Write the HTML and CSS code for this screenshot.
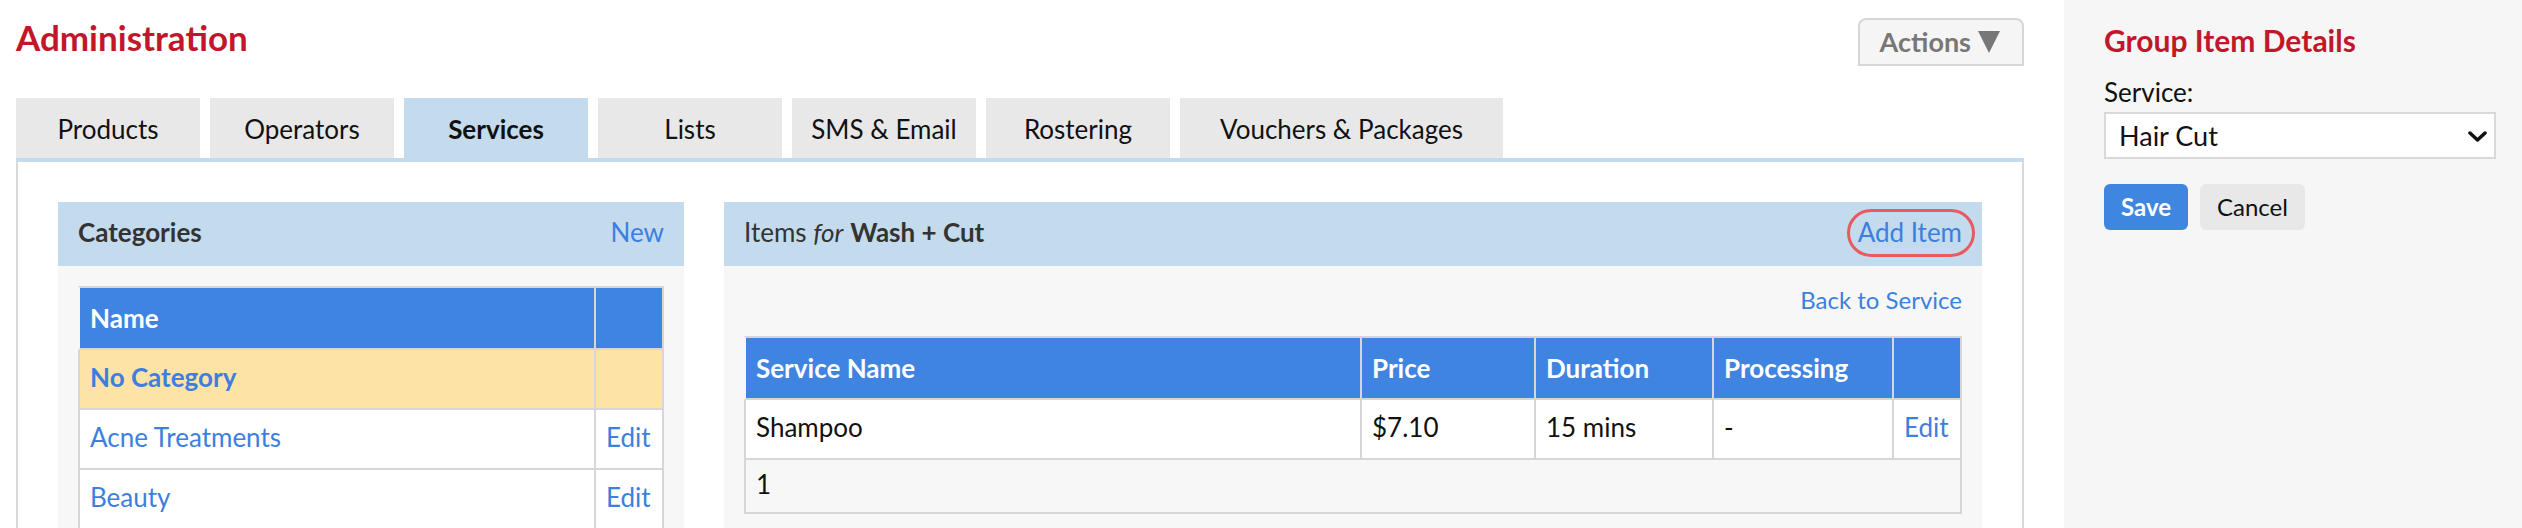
FILE: index.html
```html
<!DOCTYPE html>
<html lang="en">
<head>
<meta charset="utf-8">
<title>Administration</title>
<link rel="stylesheet" href="styles.css">
</head>
<body>
<div class="page">
  <main class="main">
    <div class="topbar">
      <h1 class="title">Administration</h1>
      <button class="actions" type="button"><span>Actions</span><svg class="tri" viewBox="0 0 22 22" width="22" height="22"><polygon points="0,0 22,0 11,22" fill="#777"/></svg></button>
    </div>
    <nav class="tabs">
      <div class="tab">Products</div>
      <div class="tab">Operators</div>
      <div class="tab active">Services</div>
      <div class="tab">Lists</div>
      <div class="tab">SMS &amp; Email</div>
      <div class="tab">Rostering</div>
      <div class="tab tab-wide">Vouchers &amp; Packages</div>
    </nav>
    <section class="content">
      <div class="panel categories">
        <div class="panel-head">
          <span class="strong">Categories</span>
          <a class="link" href="#">New</a>
        </div>
        <div class="panel-body">
          <table class="grid">
            <thead>
              <tr><th>Name</th><th class="w-edit"></th></tr>
            </thead>
            <tbody>
              <tr class="selected"><td><a class="link strong" href="#">No Category</a></td><td></td></tr>
              <tr><td><a class="link" href="#">Acne Treatments</a></td><td><a class="link" href="#">Edit</a></td></tr>
              <tr><td><a class="link" href="#">Beauty</a></td><td><a class="link" href="#">Edit</a></td></tr>
            </tbody>
          </table>
        </div>
      </div>
      <div class="panel items">
        <div class="panel-head">
          <span>Items <em>for</em> <span class="strong">Wash + Cut</span></span>
          <a class="link annot" href="#">Add Item</a>
        </div>
        <div class="panel-body">
          <div class="back-row"><a class="link" href="#">Back to Service</a></div>
          <table class="grid">
            <thead>
              <tr><th>Service Name</th><th class="w-price">Price</th><th class="w-dur">Duration</th><th class="w-proc">Processing</th><th class="w-edit"></th></tr>
            </thead>
            <tbody>
              <tr><td>Shampoo</td><td>$7.10</td><td>15 mins</td><td>-</td><td><a class="link" href="#">Edit</a></td></tr>
              <tr class="foot"><td colspan="5">1</td></tr>
            </tbody>
          </table>
        </div>
      </div>
    </section>
  </main>
  <aside class="sidebar">
    <h2 class="side-title">Group Item Details</h2>
    <div class="label">Service:</div>
    <div class="select-wrap">
      <select class="select"><option>Hair Cut</option></select>
      <svg class="chev" viewBox="0 0 19 11" width="19" height="11"><polyline points="2,2 9.5,9 17,2" fill="none" stroke="#111" stroke-width="3.5" stroke-linecap="round" stroke-linejoin="round"/></svg>
    </div>
    <div class="buttons">
      <button class="btn btn-primary" type="button">Save</button>
      <button class="btn btn-secondary" type="button">Cancel</button>
    </div>
  </aside>
</div>
</body>
</html>
```
FILE: styles.css
```css
html, body {
  margin: 0;
  padding: 0;
  background: #fff;
}
body {
  font-family: Lato, "Noto Sans", sans-serif;
  color: #111;
}
.page {
  display: flex;
  min-height: 100vh;
}
.main {
  flex: 1;
  min-width: 0;
  padding: 0 40px 0 16px;
}
.topbar {
  display: flex;
  justify-content: space-between;
  align-items: flex-start;
  height: 98px;
}
.title {
  margin: 15px 0 0;
  font-size: 35px;
  line-height: 44px;
  font-weight: 700;
  color: #c2172b;
}
.actions {
  margin-top: 18px;
  height: 48px;
  box-sizing: border-box;
  border: 2px solid #d6d6d6;
  border-radius: 8px 8px 0 0;
  background: #f5f5f5;
  color: #777;
  font-family: inherit;
  font-size: 27px;
  font-weight: 700;
  line-height: 44px;
  padding: 0 22px 0 20px;
  display: flex;
  align-items: center;
  gap: 7px;
}
.tri {
  display: block;
}
.tabs {
  display: flex;
  gap: 10px;
}
.tab {
  width: 184px;
  height: 60px;
  box-sizing: border-box;
  padding-top: 2px;
  line-height: 58px;
  text-align: center;
  background: #e8e8e8;
  font-size: 26px;
  color: #111;
}
.tab.active {
  background: #c3dbec;
  font-weight: 700;
}
.tab-wide {
  width: 323px;
}
.content {
  border: 2px solid #d8d8d8;
  border-top: 4px solid #c3dbec;
  padding: 40px;
  display: flex;
  gap: 40px;
}
.panel.categories {
  width: 626px;
  flex: none;
}
.panel.items {
  flex: 1;
  min-width: 0;
}
.panel-head {
  height: 64px;
  box-sizing: border-box;
  padding: 0 20px 4px;
  background: #c3dbec;
  display: flex;
  align-items: center;
  justify-content: space-between;
  font-size: 26px;
  color: #333;
}
.panel-head > * {
  line-height: 32px;
}
.panel-head em {
  font-style: italic;
}
.strong {
  font-weight: 700;
}
.panel-body {
  background: #f7f7f7;
  padding: 20px;
}
.link {
  color: #3d7fdf;
  text-decoration: none;
}
.annot {
  position: relative;
}
.annot::after {
  content: "";
  position: absolute;
  left: -11px;
  right: -13px;
  top: -7px;
  bottom: -9px;
  border: 3px solid #e95a60;
  border-radius: 26px;
}
.back-row {
  text-align: right;
  font-size: 24px;
  line-height: 28px;
  margin-bottom: 22px;
}
.grid {
  width: 100%;
  border-spacing: 0;
  table-layout: fixed;
  font-size: 26px;
}
.grid th,
.grid td {
  box-sizing: border-box;
  text-align: left;
  white-space: nowrap;
  overflow: hidden;
}
.grid th {
  background: #3f84e0;
  background-clip: padding-box;
  color: #fff;
  font-weight: 700;
  line-height: 60px;
  padding: 0 10px;
  border-top: 2px solid #d6d6d6;
  border-bottom: 2px solid #d6d6d6;
  border-right: 2px solid #d6d6d6;
}
.grid th:first-child {
  border-left: 2px solid transparent;
}
.grid td {
  background: #fff;
  line-height: 55px;
  padding: 0 10px 3px;
  border-bottom: 2px solid #d6d6d6;
  border-right: 2px solid #d6d6d6;
}
.grid td:first-child {
  border-left: 2px solid #d6d6d6;
}
.grid tr.selected td {
  background: #fde3a5;
}
.grid tr.foot td {
  background: transparent;
  line-height: 49px;
}
.w-edit { width: 68px; }
.w-price { width: 174px; }
.w-dur { width: 178px; }
.w-proc { width: 180px; }
.sidebar {
  width: 458px;
  flex: none;
  box-sizing: border-box;
  background: #f6f6f6;
  padding: 22px 26px 0 40px;
}
.side-title {
  margin: 0;
  font-size: 30px;
  line-height: 37px;
  font-weight: 700;
  color: #c2172b;
}
.label {
  margin-top: 18px;
  font-size: 26px;
  line-height: 31px;
}
.select-wrap {
  margin-top: 4px;
  position: relative;
}
.select {
  display: block;
  width: 100%;
  height: 47px;
  box-sizing: border-box;
  border: 2px solid #d9d9d9;
  border-radius: 0;
  background: #fff;
  -webkit-appearance: none;
  appearance: none;
  font-family: inherit;
  font-size: 27px;
  color: #111;
  padding: 0 0 0 13px;
  margin: 0;
}
.chev {
  position: absolute;
  right: 9px;
  top: 19px;
  pointer-events: none;
}
.buttons {
  margin-top: 25px;
  display: flex;
  gap: 12px;
}
.btn {
  height: 46px;
  line-height: 46px;
  padding: 0 17px;
  border: 0;
  border-radius: 6px;
  font-family: inherit;
  font-size: 24px;
}
.btn-primary {
  background: #3f86e0;
  color: #fff;
  font-weight: 700;
}
.btn-secondary {
  background: #e8e8e8;
  color: #111;
}
```
